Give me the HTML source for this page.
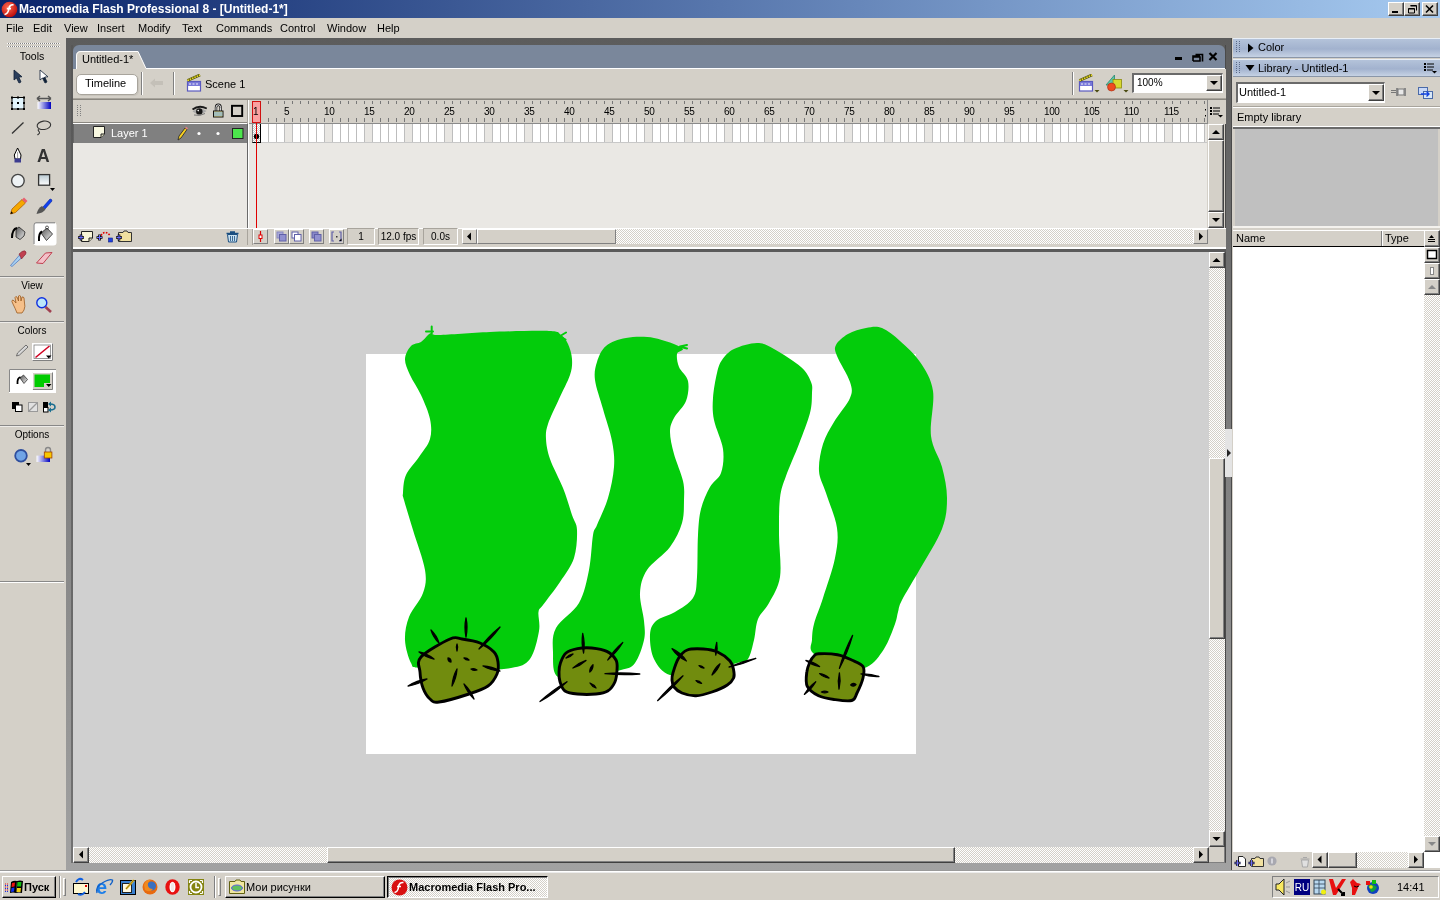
<!DOCTYPE html>
<html><head><meta charset="utf-8">
<style>
*{margin:0;padding:0;box-sizing:border-box}
html,body{will-change:transform;width:1440px;height:900px;overflow:hidden;background:#D4D0C8;font-family:"Liberation Sans",sans-serif;font-size:11px;color:#000}
.a{position:absolute}
.t{position:absolute;white-space:nowrap;line-height:13px}
.hatch{background-color:#E6E3DC;background-image:repeating-conic-gradient(#D4D0C8 0 25%,#FFFFFF 0 50%);background-size:2px 2px}
.btn{position:absolute;background:#D4D0C8;border-top:1px solid #fff;border-left:1px solid #fff;border-right:1px solid #404040;border-bottom:1px solid #404040;box-shadow:inset -1px -1px 0 #808080}
.sunk{position:absolute;border-top:1px solid #808080;border-left:1px solid #808080;border-right:1px solid #fff;border-bottom:1px solid #fff}
</style></head><body>
<!-- title bar -->
<div class="a" style="left:0;top:0;width:1440px;height:18px;background:linear-gradient(to right,#0A246A,#A6CAF0)"></div>
<div class="t" style="left:19px;top:2px;color:#fff;font-weight:bold;font-size:12px;line-height:14px">Macromedia Flash Professional 8 - [Untitled-1*]</div>
<!-- menu -->
<div class="t" style="left:6px;top:22px">File</div>
<div class="t" style="left:33px;top:22px">Edit</div>
<div class="t" style="left:64px;top:22px">View</div>
<div class="t" style="left:97px;top:22px">Insert</div>
<div class="t" style="left:138px;top:22px">Modify</div>
<div class="t" style="left:182px;top:22px">Text</div>
<div class="t" style="left:216px;top:22px">Commands</div>
<div class="t" style="left:280px;top:22px">Control</div>
<div class="t" style="left:327px;top:22px">Window</div>
<div class="t" style="left:377px;top:22px">Help</div>
<svg class="a" style="left:1px;top:1px" width="17" height="17"><defs><radialGradient id="flg" cx="0.4" cy="0.35" r="0.7"><stop offset="0" stop-color="#FF6A50"/><stop offset="1" stop-color="#B80808"/></radialGradient></defs><circle cx="8.5" cy="8.5" r="7.8" fill="url(#flg)"/><path d="M12.5,3.8 Q8.5,3.2 7.8,8 Q7.2,12.8 3.5,13.5 M5.8,7.6 h4.2" stroke="#fff" stroke-width="1.7" fill="none"/></svg>
<div class="btn" style="left:1388px;top:2px;width:16px;height:14px"></div>
<div class="btn" style="left:1404px;top:2px;width:16px;height:14px"></div>
<div class="btn" style="left:1422px;top:2px;width:16px;height:14px"></div>
<svg class="a" style="left:1388px;top:2px" width="50" height="14"><rect x="4" y="9" width="6" height="2" fill="#000"/>
<path d="M22.5,3.5 h6 v5 M20.5,6.5 h6 v4.5 h-6 z" stroke="#000" stroke-width="1" fill="none"/><path d="M22.5,4 h6 M20.5,7 h6" stroke="#000" stroke-width="1"/>
<path d="M38,3.5 L45,10.5 M45,3.5 L38,10.5" stroke="#000" stroke-width="1.6"/></svg>
<!-- tools panel -->
<svg class="a" style="left:0;top:0" width="66" height="600" viewBox="0 0 66 600">
<defs>
<linearGradient id="gblue" x1="0" x2="1"><stop offset="0" stop-color="#fff"/><stop offset="1" stop-color="#0000C0"/></linearGradient>
<linearGradient id="glight" x1="0" y1="0" x2="0" y2="1"><stop offset="0" stop-color="#B8C8D0"/><stop offset="1" stop-color="#fff"/></linearGradient>
<linearGradient id="ggray" x1="0" y1="0" x2="1" y2="1"><stop offset="0" stop-color="#555"/><stop offset="1" stop-color="#eee"/></linearGradient>
</defs>
<!-- gripper -->
<path d="M7,43.5 H60 M7,46.5 H60" stroke="#fff" stroke-width="1" stroke-dasharray="1 1"/>
<path d="M8,43.5 H60 M8,46.5 H60" stroke="#808080" stroke-width="1" stroke-dasharray="1 1"/>
<!-- arrow -->
<path d="M14,70 L14,80 L16.5,78 L19,83 L21,82 L18.8,77 L22,76.8 Z" fill="#2A3E5C" stroke="#0F2036" stroke-width="0.8"/>
<path d="M40,70 L40,80 L42.5,78 L45,83 L47,82 L44.8,77 L48,76.8 Z" fill="#fff" stroke="#0F2036" stroke-width="0.8"/>
<path d="M42.5,78 L45,83 L47,82 L44.8,77 Z" fill="#0F2036"/>
<!-- free transform -->
<rect x="12" y="97.5" width="12" height="11.5" fill="#E2F4FC" stroke="#000" stroke-width="1"/>
<g fill="#000"><rect x="11" y="96.5" width="2" height="2"/><rect x="17" y="96.5" width="2" height="2"/><rect x="23" y="96.5" width="2" height="2"/><rect x="11" y="102" width="2" height="2"/><rect x="23" y="102" width="2" height="2"/><rect x="11" y="108" width="2" height="2"/><rect x="17" y="108" width="2" height="2"/><rect x="23" y="108" width="2" height="2"/><rect x="17" y="102" width="2" height="2"/></g>
<!-- gradient transform -->
<path d="M37,98.5 H51 M37,98.5 L40,96 M37,98.5 L40,101 M51,98.5 L48,96 M51,98.5 L48,101" stroke="#555" stroke-width="1.5" fill="none"/>
<rect x="37.5" y="102" width="13.5" height="7" fill="url(#gblue)"/>
<!-- line -->
<path d="M12,133.5 L23.5,122.5" stroke="#333" stroke-width="1.3"/>
<!-- lasso -->
<ellipse cx="43.9" cy="125.3" rx="6.8" ry="4.2" fill="none" stroke="#333" stroke-width="1.1" transform="rotate(-8 43.9 125.3)"/>
<path d="M38.5,129 C37,131 40,131.5 39.5,133 C39,134 38,134.5 37.5,135" stroke="#333" stroke-width="1.1" fill="none"/>
<!-- pen -->
<path d="M17.6,148 L14.3,155 L15,159 L20.5,159 L21,155 Z" fill="#fff" stroke="#000" stroke-width="1"/>
<path d="M17.6,152 V158" stroke="#888" stroke-width="0.8"/>
<rect x="14.5" y="158.5" width="6.5" height="4" fill="#3C3C90"/>
<!-- A -->
<text x="37" y="162" font-family="Liberation Sans" font-weight="bold" font-size="17.5" fill="#333">A</text>
<!-- circle -->
<circle cx="17.9" cy="180.7" r="6.3" fill="#EEF2F4" stroke="#444" stroke-width="1.4"/>
<!-- rect -->
<rect x="38.6" y="174.6" width="11" height="10.6" fill="url(#glight)" stroke="#333" stroke-width="1.3"/>
<path d="M50,188 L55,188 L52.5,191 Z" fill="#000"/>
<!-- pencil -->
<path d="M10.5,214 L12,209 L22,199.5 L25.5,203 L15.5,212.5 Z" fill="#F6A800" stroke="#B06000" stroke-width="0.8"/>
<path d="M22,199.5 L24,197.5 L27.5,201 L25.5,203 Z" fill="#E86070"/>
<path d="M10.5,214 L11.3,211.3 L13.2,213.2 Z" fill="#000"/>
<!-- brush -->
<path d="M43,207 L50,199 Q52,199 52,201 L45,209 Z" fill="#1040F0" stroke="#0020A0" stroke-width="0.6"/>
<path d="M36.5,214 Q38,208 42,206 L45.5,209.5 Q43,213 36.5,214 Z" fill="#555"/>
<!-- selected button -->
<rect x="33.5" y="222.5" width="23" height="23" rx="3" fill="#fff"/>
<path d="M34,244 V225 Q34,222.8 36,222.8 H55" stroke="#777" stroke-width="1" fill="none"/>
<!-- ink bottle -->
<path d="M16,229 L19,227 L25,232 L24,236 L20,239.5 L16,237 Z" fill="url(#ggray)" stroke="#222" stroke-width="0.8"/>
<path d="M17,228 Q12,229 12,238" stroke="#000" stroke-width="2" fill="none"/>
<!-- bucket -->
<path d="M41,233 L47,228 L52.5,234 L46.5,240.5 Z" fill="url(#ggray)" stroke="#222" stroke-width="0.8"/>
<circle cx="47" cy="227.5" r="1.5" fill="none" stroke="#333" stroke-width="0.8"/>
<path d="M42,231.5 Q38.5,233 39,241" stroke="#000" stroke-width="2" fill="none"/>
<!-- dropper -->
<path d="M10.5,265.5 L20,254.5 L22.5,257 L12,266.5 Z" fill="#A8D0F0" stroke="#4070C0" stroke-width="0.7"/>
<path d="M19,254 L22,251.5 Q25,250 26,252 Q26.5,254 24,256 L21.5,259 Z" fill="#C04050" stroke="#802030" stroke-width="0.6"/>
<!-- eraser -->
<path d="M36.5,263 L45.5,253 L52,252.5 L43,263.5 Z" fill="#F3C0C8" stroke="#C04050" stroke-width="1"/>
<!-- separators -->
<rect x="0" y="276" width="64" height="1" fill="#888"/><rect x="0" y="277" width="64" height="1" fill="#fff" opacity=".6"/>
<text x="32" y="289" text-anchor="middle" font-family="Liberation Sans" font-size="10">View</text>
<!-- hand -->
<path d="M13,304 Q11,301 12.5,300 Q14,300 16,303 L15,297.5 Q15.5,296 17,297 L18.5,301 L18.5,296 Q19.5,295 20.5,296 L21,301 L22,297 Q23.5,296.5 24,298 L24.5,303 Q25.5,306 24,310 L22,313 L17,313 Q15.5,309 13,304 Z" fill="#F6C08A" stroke="#9A5A20" stroke-width="0.8"/>
<!-- zoom -->
<path d="M45.5,307 L51,312" stroke="#A04050" stroke-width="2.6"/>
<circle cx="41.8" cy="302.8" r="5" fill="#BCE6FA" stroke="#1030E0" stroke-width="1.4"/>
<rect x="0" y="321" width="64" height="1" fill="#888"/><rect x="0" y="322" width="64" height="1" fill="#fff" opacity=".6"/>
<text x="32" y="334" text-anchor="middle" font-family="Liberation Sans" font-size="10">Colors</text>
<!-- stroke pencil -->
<path d="M16.5,356 L17.5,353 L26,345 L28,347 L19.5,355 Z" fill="#D8D8D8" stroke="#555" stroke-width="0.8"/>
<!-- stroke swatch -->
<rect x="32" y="343" width="21" height="18" fill="#fff"/>
<path d="M32.5,360.5 V343.5 H52.5" stroke="#fff" fill="none"/>
<path d="M32.5,360.5 H52.5 V343.5" stroke="#808080" fill="none"/>
<rect x="34" y="345" width="16.5" height="13.5" fill="#fff" stroke="#808080" stroke-width="0.8"/>
<path d="M35.5,357.5 L49.5,346" stroke="#D00020" stroke-width="1.6"/>
<path d="M46,355.5 L51.5,355.5 L48.75,358.5 Z" fill="#000"/>
<!-- fill row -->
<rect x="9" y="369" width="47" height="24" fill="#fff"/>
<path d="M9.5,392 V369.5 H56" stroke="#888" stroke-width="1" fill="none"/>
<path d="M20,378 L23.5,375 L27.5,379.5 L24,383.5 Z" fill="url(#ggray)" stroke="#222" stroke-width="0.7"/>
<path d="M20.5,377 Q17,378 17.5,384" stroke="#000" stroke-width="1.8" fill="none"/>
<rect x="32.5" y="372" width="20" height="18" fill="#D4D0C8"/>
<path d="M32.5,389.5 V372.5 H52.5" stroke="#fff" fill="none"/>
<path d="M33,389.5 H52.5 V372.5" stroke="#808080" fill="none"/>
<path d="M34.5,374.5 H50 V383 H44 V387 H34.5 Z" fill="#00CC00"/>
<path d="M46,384 L51.5,384 L48.75,387 Z" fill="#000"/>
<!-- small icons -->
<rect x="12" y="402" width="7" height="7" fill="#000"/>
<rect x="15.5" y="405" width="6.5" height="6.5" fill="#fff" stroke="#000" stroke-width="1"/>
<rect x="28.5" y="402.5" width="9" height="9" fill="#E0E0E0" stroke="#999" stroke-width="1"/>
<path d="M29,411 L37,403" stroke="#999" stroke-width="1.2"/>
<rect x="43" y="402" width="5" height="5" fill="#000"/>
<rect x="43.5" y="407.5" width="4.5" height="4.5" fill="#fff" stroke="#000" stroke-width="1"/>
<path d="M50,404 Q55,404 55,407 Q55,410 50,410" stroke="#1A6E90" stroke-width="1.6" fill="none"/>
<path d="M48,404 L51,401.5 L51,406.5 Z M48,410 L51,407.5 L51,412.5 Z" fill="#1A6E90"/>
<rect x="0" y="425" width="64" height="1" fill="#888"/><rect x="0" y="426" width="64" height="1" fill="#fff" opacity=".6"/>
<text x="32" y="438" text-anchor="middle" font-family="Liberation Sans" font-size="10">Options</text>
<!-- options icons -->
<circle cx="21" cy="455.8" r="5.8" fill="#70A4E6" stroke="#2E4E9E" stroke-width="1.8"/>
<path d="M26,463 L31,463 L28.5,466 Z" fill="#000"/>
<rect x="36.5" y="455.6" width="13.5" height="6.4" fill="url(#gblue)"/>
<path d="M45.5,452 V450 Q45.5,447.5 48,447.5 Q50.5,447.5 50.5,450 V452" stroke="#888" stroke-width="1.4" fill="none"/>
<rect x="44.3" y="452" width="7.6" height="6" fill="#F8C800" stroke="#A04000" stroke-width="0.8"/>
<rect x="0" y="581" width="64" height="1" fill="#888"/><rect x="0" y="582" width="64" height="1" fill="#fff"/>
</svg>
<div class="t" style="left:0;top:50px;width:64px;text-align:center;font-size:10.5px">Tools</div>
<div class="a" style="left:66px;top:38px;width:1166px;height:833px;background:linear-gradient(to bottom,#5C5C5C,#A2A2A2)"></div>
<div class="a" style="left:71px;top:45px;width:2px;height:818px;background:linear-gradient(to bottom,#555,#666);opacity:.8"></div>
<div class="a" style="left:1225px;top:45px;width:1px;height:818px;background:#4A4A4A"></div>
<div class="a" style="left:1231px;top:38px;width:1px;height:833px;background:#4A4A4A"></div>
<div class="a" style="left:73px;top:862px;width:1153px;height:1px;background:#5A5A5A"></div>
<div class="a" style="left:73px;top:45px;width:1152px;height:24px;background:#7A879B;border-radius:6px 6px 0 0"></div>
<svg class="a" style="left:73px;top:45px" width="90" height="25"><path d="M3,24 V11 Q3,6 8,6 H65 L73,23.5 H90 V25 H3 Z" fill="#D4D0C8"/><path d="M3.5,24 V11 Q3.5,6.5 8,6.5 H65 L73,23.5 H90" stroke="#fff" fill="none"/></svg>
<div class="a" style="left:146px;top:68px;width:1079px;height:1px;background:#fff"></div>
<div class="t" style="left:82px;top:53px">Untitled-1*</div>
<svg class="a" style="left:1170px;top:48px" width="56" height="16"><rect x="5" y="9" width="7" height="3" fill="#000"/><path d="M25.5,6.5 h7 v7 M23,13 h7 v-4 h-7 v4 m0,-4 v-1 h7" stroke="#000" stroke-width="1.6" fill="none"/><path d="M39.5,5 L46.5,12 M46.5,5 L39.5,12" stroke="#000" stroke-width="2.2"/></svg>
<div class="a" style="left:73px;top:69px;width:1153px;height:30px;background:#D4D0C8"></div>
<div class="a" style="left:73px;top:98px;width:1153px;height:1px;background:#A8A49C"></div>
<div class="a" style="left:73px;top:99px;width:1153px;height:1px;background:#8A8780"></div>
<div class="a" style="left:76px;top:74px;width:62px;height:21px;background:#fff;border:1px solid #A8A49C;border-radius:5px;box-shadow:1px 1px 0 #C8C4BC"></div>
<div class="t" style="left:85px;top:77px">Timeline</div>
<div class="a" style="left:141px;top:72px;width:1px;height:23px;background:#808080"></div><div class="a" style="left:142px;top:72px;width:1px;height:23px;background:#fff"></div>
<svg class="a" style="left:148px;top:77px" width="18" height="14"><path d="M2,6 L7,1.5 V4 H15 V8 H7 V10.5 Z" fill="#C4C0B8"/></svg>
<div class="a" style="left:173px;top:72px;width:1px;height:23px;background:#808080"></div><div class="a" style="left:174px;top:72px;width:1px;height:23px;background:#fff"></div>
<svg class="a" style="left:186px;top:74px" width="18" height="19"><rect x="1.5" y="7.5" width="13" height="9.5" fill="#fff" stroke="#5A5AC0" stroke-width="1.2"/><rect x="2" y="8" width="12" height="4" fill="#7878D8"/><path d="M3,10 h2 M6.5,10 h2 M10,10 h2" stroke="#fff" stroke-width="0.9"/><path d="M1.5,6.5 L14,1" stroke="#5A5A10" stroke-width="3"/><path d="M1.5,6.5 L14,1" stroke="#F0E020" stroke-width="1.6" stroke-dasharray="1.5 1"/></svg>
<div class="t" style="left:205px;top:78px">Scene 1</div>
<div class="a" style="left:1072px;top:72px;width:1px;height:23px;background:#808080"></div><div class="a" style="left:1073px;top:72px;width:1px;height:23px;background:#fff"></div>
<svg class="a" style="left:1078px;top:74px" width="24" height="20"><rect x="1.5" y="7.5" width="13" height="9.5" fill="#fff" stroke="#5A5AC0" stroke-width="1.2"/><rect x="2" y="8" width="12" height="4" fill="#7878D8"/><path d="M3,10 h2 M6.5,10 h2 M10,10 h2" stroke="#fff" stroke-width="0.9"/><path d="M1.5,6.5 L14,1" stroke="#5A5A10" stroke-width="3"/><path d="M1.5,6.5 L14,1" stroke="#F0E020" stroke-width="1.6" stroke-dasharray="1.5 1"/><path d="M16.5,16 h5 l-2.5,2.5 z" fill="#4A4A10"/></svg>
<svg class="a" style="left:1105px;top:74px" width="26" height="20"><path d="M1,11 L9.5,1 V11 Z" fill="#5AC8A8" stroke="#2A8870" stroke-width="0.8"/><rect x="8" y="5.5" width="8.5" height="8.5" fill="#D8D830" stroke="#8A8A10" stroke-width="0.8"/><circle cx="6.5" cy="13" r="4" fill="#F04A20" stroke="#A02A10" stroke-width="0.6"/><path d="M18.5,16 h5 l-2.5,2.5 z" fill="#4A4A10"/></svg>
<div class="a" style="left:1132px;top:73px;width:91px;height:20px;background:#fff;border-top:2px solid #6A6A6A;border-left:2px solid #6A6A6A;border-bottom:1px solid #fff;border-right:1px solid #fff;box-shadow:0 0 0 0 #000"></div>
<div class="t" style="left:1137px;top:76px;font-size:10px">100%</div>
<div class="btn" style="left:1206px;top:75px;width:16px;height:16px"></div>
<svg class="a" style="left:1206px;top:75px" width="16" height="16"><path d="M4,6 h8 l-4,4 z" fill="#000"/></svg>
<div class="a" style="left:1207px;top:100px;width:18px;height:147px;background:#D4D0C8"></div>
<div class="a" style="left:73px;top:100px;width:1153px;height:24px;background:#D4D0C8"></div>
<div class="a" style="left:73px;top:122px;width:175px;height:1px;background:#8A8780"></div>
<svg class="a" style="left:76px;top:104px" width="8" height="14"><g fill="#808080"><rect x="1" y="1" width="1" height="1"/><rect x="1" y="3" width="1" height="1"/><rect x="1" y="5" width="1" height="1"/><rect x="1" y="7" width="1" height="1"/><rect x="1" y="9" width="1" height="1"/><rect x="1" y="11" width="1" height="1"/><rect x="4" y="1" width="1" height="1"/><rect x="4" y="3" width="1" height="1"/><rect x="4" y="5" width="1" height="1"/><rect x="4" y="7" width="1" height="1"/><rect x="4" y="9" width="1" height="1"/><rect x="4" y="11" width="1" height="1"/></g></svg>
<svg class="a" style="left:190px;top:103px" width="56" height="16"><path d="M2.5,8.5 Q9,3 16.5,8 Q10,14 2.5,8.5 Z" fill="#A8A8A8"/><circle cx="9.3" cy="8.4" r="3.2" fill="#151515"/><circle cx="8.2" cy="7.6" r="0.8" fill="#fff"/><path d="M2.5,6.5 Q9,1.5 16.8,5.5" stroke="#1A1A1A" stroke-width="1.8" fill="none"/><path d="M4,12 Q10,13.5 15,10.5" stroke="#777" stroke-width="1" fill="none"/><path d="M26,8 V4.5 Q26,1.8 28.3,1.8 Q30.6,1.8 30.6,4.5 V8" stroke="#111" stroke-width="2.4" fill="none"/><path d="M26,8 V4.5 Q26,1.8 28.3,1.8 Q30.6,1.8 30.6,4.5 V8" stroke="#fff" stroke-width="0.9" fill="none"/><rect x="23.5" y="8" width="9.5" height="6" fill="#F8F0A0" stroke="#111" stroke-width="1"/><path d="M24,10 h8.5 M24,12 h8.5" stroke="#3A80D8" stroke-width="0.9"/><rect x="42" y="2.8" width="10.2" height="10.2" fill="none" stroke="#000" stroke-width="1.9"/></svg>
<div class="a" style="left:247px;top:100px;width:1px;height:24px;background:#A8A49C"></div>
<div class="a" style="left:248px;top:100px;width:1px;height:144px;background:#fff"></div>
<svg class="a" style="left:0;top:100px" width="1210" height="24"><path d="M260.5,1 v3 M260.5,18 v4 M268.5,1 v3 M268.5,18 v4 M276.5,1 v3 M276.5,18 v4 M284.5,1 v3 M284.5,18 v4 M292.5,1 v3 M292.5,18 v4 M300.5,1 v3 M300.5,18 v4 M308.5,1 v3 M308.5,18 v4 M316.5,1 v3 M316.5,18 v4 M324.5,1 v3 M324.5,18 v4 M332.5,1 v3 M332.5,18 v4 M340.5,1 v3 M340.5,18 v4 M348.5,1 v3 M348.5,18 v4 M356.5,1 v3 M356.5,18 v4 M364.5,1 v3 M364.5,18 v4 M372.5,1 v3 M372.5,18 v4 M380.5,1 v3 M380.5,18 v4 M388.5,1 v3 M388.5,18 v4 M396.5,1 v3 M396.5,18 v4 M404.5,1 v3 M404.5,18 v4 M412.5,1 v3 M412.5,18 v4 M420.5,1 v3 M420.5,18 v4 M428.5,1 v3 M428.5,18 v4 M436.5,1 v3 M436.5,18 v4 M444.5,1 v3 M444.5,18 v4 M452.5,1 v3 M452.5,18 v4 M460.5,1 v3 M460.5,18 v4 M468.5,1 v3 M468.5,18 v4 M476.5,1 v3 M476.5,18 v4 M484.5,1 v3 M484.5,18 v4 M492.5,1 v3 M492.5,18 v4 M500.5,1 v3 M500.5,18 v4 M508.5,1 v3 M508.5,18 v4 M516.5,1 v3 M516.5,18 v4 M524.5,1 v3 M524.5,18 v4 M532.5,1 v3 M532.5,18 v4 M540.5,1 v3 M540.5,18 v4 M548.5,1 v3 M548.5,18 v4 M556.5,1 v3 M556.5,18 v4 M564.5,1 v3 M564.5,18 v4 M572.5,1 v3 M572.5,18 v4 M580.5,1 v3 M580.5,18 v4 M588.5,1 v3 M588.5,18 v4 M596.5,1 v3 M596.5,18 v4 M604.5,1 v3 M604.5,18 v4 M612.5,1 v3 M612.5,18 v4 M620.5,1 v3 M620.5,18 v4 M628.5,1 v3 M628.5,18 v4 M636.5,1 v3 M636.5,18 v4 M644.5,1 v3 M644.5,18 v4 M652.5,1 v3 M652.5,18 v4 M660.5,1 v3 M660.5,18 v4 M668.5,1 v3 M668.5,18 v4 M676.5,1 v3 M676.5,18 v4 M684.5,1 v3 M684.5,18 v4 M692.5,1 v3 M692.5,18 v4 M700.5,1 v3 M700.5,18 v4 M708.5,1 v3 M708.5,18 v4 M716.5,1 v3 M716.5,18 v4 M724.5,1 v3 M724.5,18 v4 M732.5,1 v3 M732.5,18 v4 M740.5,1 v3 M740.5,18 v4 M748.5,1 v3 M748.5,18 v4 M756.5,1 v3 M756.5,18 v4 M764.5,1 v3 M764.5,18 v4 M772.5,1 v3 M772.5,18 v4 M780.5,1 v3 M780.5,18 v4 M788.5,1 v3 M788.5,18 v4 M796.5,1 v3 M796.5,18 v4 M804.5,1 v3 M804.5,18 v4 M812.5,1 v3 M812.5,18 v4 M820.5,1 v3 M820.5,18 v4 M828.5,1 v3 M828.5,18 v4 M836.5,1 v3 M836.5,18 v4 M844.5,1 v3 M844.5,18 v4 M852.5,1 v3 M852.5,18 v4 M860.5,1 v3 M860.5,18 v4 M868.5,1 v3 M868.5,18 v4 M876.5,1 v3 M876.5,18 v4 M884.5,1 v3 M884.5,18 v4 M892.5,1 v3 M892.5,18 v4 M900.5,1 v3 M900.5,18 v4 M908.5,1 v3 M908.5,18 v4 M916.5,1 v3 M916.5,18 v4 M924.5,1 v3 M924.5,18 v4 M932.5,1 v3 M932.5,18 v4 M940.5,1 v3 M940.5,18 v4 M948.5,1 v3 M948.5,18 v4 M956.5,1 v3 M956.5,18 v4 M964.5,1 v3 M964.5,18 v4 M972.5,1 v3 M972.5,18 v4 M980.5,1 v3 M980.5,18 v4 M988.5,1 v3 M988.5,18 v4 M996.5,1 v3 M996.5,18 v4 M1004.5,1 v3 M1004.5,18 v4 M1012.5,1 v3 M1012.5,18 v4 M1020.5,1 v3 M1020.5,18 v4 M1028.5,1 v3 M1028.5,18 v4 M1036.5,1 v3 M1036.5,18 v4 M1044.5,1 v3 M1044.5,18 v4 M1052.5,1 v3 M1052.5,18 v4 M1060.5,1 v3 M1060.5,18 v4 M1068.5,1 v3 M1068.5,18 v4 M1076.5,1 v3 M1076.5,18 v4 M1084.5,1 v3 M1084.5,18 v4 M1092.5,1 v3 M1092.5,18 v4 M1100.5,1 v3 M1100.5,18 v4 M1108.5,1 v3 M1108.5,18 v4 M1116.5,1 v3 M1116.5,18 v4 M1124.5,1 v3 M1124.5,18 v4 M1132.5,1 v3 M1132.5,18 v4 M1140.5,1 v3 M1140.5,18 v4 M1148.5,1 v3 M1148.5,18 v4 M1156.5,1 v3 M1156.5,18 v4 M1164.5,1 v3 M1164.5,18 v4 M1172.5,1 v3 M1172.5,18 v4 M1180.5,1 v3 M1180.5,18 v4 M1188.5,1 v3 M1188.5,18 v4 M1196.5,1 v3 M1196.5,18 v4 M1204.5,1 v3 M1204.5,18 v4" stroke="#777" stroke-width="1"/></svg>
<div class="t" style="left:253px;top:105px;font-size:10px;letter-spacing:-0.4px">1</div><div class="t" style="left:284px;top:105px;font-size:10px;letter-spacing:-0.4px">5</div><div class="t" style="left:324px;top:105px;font-size:10px;letter-spacing:-0.4px">10</div><div class="t" style="left:364px;top:105px;font-size:10px;letter-spacing:-0.4px">15</div><div class="t" style="left:404px;top:105px;font-size:10px;letter-spacing:-0.4px">20</div><div class="t" style="left:444px;top:105px;font-size:10px;letter-spacing:-0.4px">25</div><div class="t" style="left:484px;top:105px;font-size:10px;letter-spacing:-0.4px">30</div><div class="t" style="left:524px;top:105px;font-size:10px;letter-spacing:-0.4px">35</div><div class="t" style="left:564px;top:105px;font-size:10px;letter-spacing:-0.4px">40</div><div class="t" style="left:604px;top:105px;font-size:10px;letter-spacing:-0.4px">45</div><div class="t" style="left:644px;top:105px;font-size:10px;letter-spacing:-0.4px">50</div><div class="t" style="left:684px;top:105px;font-size:10px;letter-spacing:-0.4px">55</div><div class="t" style="left:724px;top:105px;font-size:10px;letter-spacing:-0.4px">60</div><div class="t" style="left:764px;top:105px;font-size:10px;letter-spacing:-0.4px">65</div><div class="t" style="left:804px;top:105px;font-size:10px;letter-spacing:-0.4px">70</div><div class="t" style="left:844px;top:105px;font-size:10px;letter-spacing:-0.4px">75</div><div class="t" style="left:884px;top:105px;font-size:10px;letter-spacing:-0.4px">80</div><div class="t" style="left:924px;top:105px;font-size:10px;letter-spacing:-0.4px">85</div><div class="t" style="left:964px;top:105px;font-size:10px;letter-spacing:-0.4px">90</div><div class="t" style="left:1004px;top:105px;font-size:10px;letter-spacing:-0.4px">95</div><div class="t" style="left:1044px;top:105px;font-size:10px;letter-spacing:-0.4px">100</div><div class="t" style="left:1084px;top:105px;font-size:10px;letter-spacing:-0.4px">105</div><div class="t" style="left:1124px;top:105px;font-size:10px;letter-spacing:-0.4px">110</div><div class="t" style="left:1164px;top:105px;font-size:10px;letter-spacing:-0.4px">115</div>
<div class="a" style="left:1207px;top:100px;width:1px;height:24px;background:#8A8A8A"></div>
<svg class="a" style="left:1204px;top:108px" width="3" height="10"><rect x="1" y="1" width="1" height="1.5" fill="#000"/><rect x="1" y="7" width="1" height="1.5" fill="#000"/></svg>
<svg class="a" style="left:1208px;top:104px" width="18" height="16"><g fill="#000"><rect x="2" y="3" width="2" height="2"/><rect x="2" y="6" width="2" height="2"/><rect x="2" y="9" width="2" height="2"/><rect x="5" y="3.5" width="7" height="1"/><rect x="5" y="6.5" width="7" height="1"/><rect x="5" y="9.5" width="6" height="1"/><path d="M10,11 h5 l-2.5,2.5 z"/></g></svg>
<div class="a" style="left:252px;top:101px;width:9px;height:22px;background:#F9A0A0;border:1px solid #D01010"></div>
<div class="t" style="left:253px;top:105px;font-size:10px">1</div>
<div class="a" style="left:73px;top:123px;width:174px;height:1px;background:#fff"></div>
<div class="a" style="left:74px;top:124px;width:173px;height:19px;background:#808080"></div>
<svg class="a" style="left:92px;top:125px" width="16" height="16"><path d="M1.5,1.5 H12.5 V9 L9,12.5 H1.5 Z" fill="#F8F8E0" stroke="#222" stroke-width="1"/><path d="M12.5,9 H9 V12.5" stroke="#222" stroke-width="1" fill="#D8D8B8"/></svg>
<div class="t" style="left:111px;top:127px;color:#fff">Layer 1</div>
<svg class="a" style="left:176px;top:126px" width="72" height="16"><path d="M2,14 L3,10 L9,2 L11,3.5 L5,12 Z" fill="#F8D020" stroke="#222" stroke-width="0.8"/><path d="M9,2 L10,0.8 L12,2.2 L11,3.5 Z" fill="#E88080"/><circle cx="23" cy="7.5" r="1.6" fill="#fff"/><circle cx="42" cy="7.5" r="1.6" fill="#fff"/><rect x="56.5" y="2.5" width="10.5" height="10" fill="#4CE64C" stroke="#222" stroke-width="1"/></svg>
<div class="a" style="left:73px;top:143px;width:174px;height:85px;background:#EAE8E4"></div>
<div class="a" style="left:249px;top:123px;width:958px;height:1px;background:#8A8A8A"></div>
<div class="a" style="left:249px;top:124px;width:3px;height:105px;background:#E4E2DC"></div>
<svg class="a" style="left:0;top:124px" width="1207" height="19"><rect x="252" y="0" width="8" height="18" fill="#FFFFFF"/><rect x="260" y="0" width="8" height="18" fill="#FFFFFF"/><rect x="268" y="0" width="8" height="18" fill="#FFFFFF"/><rect x="276" y="0" width="8" height="18" fill="#FFFFFF"/><rect x="284" y="0" width="8" height="18" fill="#E8E6E2"/><rect x="292" y="0" width="8" height="18" fill="#FFFFFF"/><rect x="300" y="0" width="8" height="18" fill="#FFFFFF"/><rect x="308" y="0" width="8" height="18" fill="#FFFFFF"/><rect x="316" y="0" width="8" height="18" fill="#FFFFFF"/><rect x="324" y="0" width="8" height="18" fill="#E8E6E2"/><rect x="332" y="0" width="8" height="18" fill="#FFFFFF"/><rect x="340" y="0" width="8" height="18" fill="#FFFFFF"/><rect x="348" y="0" width="8" height="18" fill="#FFFFFF"/><rect x="356" y="0" width="8" height="18" fill="#FFFFFF"/><rect x="364" y="0" width="8" height="18" fill="#E8E6E2"/><rect x="372" y="0" width="8" height="18" fill="#FFFFFF"/><rect x="380" y="0" width="8" height="18" fill="#FFFFFF"/><rect x="388" y="0" width="8" height="18" fill="#FFFFFF"/><rect x="396" y="0" width="8" height="18" fill="#FFFFFF"/><rect x="404" y="0" width="8" height="18" fill="#E8E6E2"/><rect x="412" y="0" width="8" height="18" fill="#FFFFFF"/><rect x="420" y="0" width="8" height="18" fill="#FFFFFF"/><rect x="428" y="0" width="8" height="18" fill="#FFFFFF"/><rect x="436" y="0" width="8" height="18" fill="#FFFFFF"/><rect x="444" y="0" width="8" height="18" fill="#E8E6E2"/><rect x="452" y="0" width="8" height="18" fill="#FFFFFF"/><rect x="460" y="0" width="8" height="18" fill="#FFFFFF"/><rect x="468" y="0" width="8" height="18" fill="#FFFFFF"/><rect x="476" y="0" width="8" height="18" fill="#FFFFFF"/><rect x="484" y="0" width="8" height="18" fill="#E8E6E2"/><rect x="492" y="0" width="8" height="18" fill="#FFFFFF"/><rect x="500" y="0" width="8" height="18" fill="#FFFFFF"/><rect x="508" y="0" width="8" height="18" fill="#FFFFFF"/><rect x="516" y="0" width="8" height="18" fill="#FFFFFF"/><rect x="524" y="0" width="8" height="18" fill="#E8E6E2"/><rect x="532" y="0" width="8" height="18" fill="#FFFFFF"/><rect x="540" y="0" width="8" height="18" fill="#FFFFFF"/><rect x="548" y="0" width="8" height="18" fill="#FFFFFF"/><rect x="556" y="0" width="8" height="18" fill="#FFFFFF"/><rect x="564" y="0" width="8" height="18" fill="#E8E6E2"/><rect x="572" y="0" width="8" height="18" fill="#FFFFFF"/><rect x="580" y="0" width="8" height="18" fill="#FFFFFF"/><rect x="588" y="0" width="8" height="18" fill="#FFFFFF"/><rect x="596" y="0" width="8" height="18" fill="#FFFFFF"/><rect x="604" y="0" width="8" height="18" fill="#E8E6E2"/><rect x="612" y="0" width="8" height="18" fill="#FFFFFF"/><rect x="620" y="0" width="8" height="18" fill="#FFFFFF"/><rect x="628" y="0" width="8" height="18" fill="#FFFFFF"/><rect x="636" y="0" width="8" height="18" fill="#FFFFFF"/><rect x="644" y="0" width="8" height="18" fill="#E8E6E2"/><rect x="652" y="0" width="8" height="18" fill="#FFFFFF"/><rect x="660" y="0" width="8" height="18" fill="#FFFFFF"/><rect x="668" y="0" width="8" height="18" fill="#FFFFFF"/><rect x="676" y="0" width="8" height="18" fill="#FFFFFF"/><rect x="684" y="0" width="8" height="18" fill="#E8E6E2"/><rect x="692" y="0" width="8" height="18" fill="#FFFFFF"/><rect x="700" y="0" width="8" height="18" fill="#FFFFFF"/><rect x="708" y="0" width="8" height="18" fill="#FFFFFF"/><rect x="716" y="0" width="8" height="18" fill="#FFFFFF"/><rect x="724" y="0" width="8" height="18" fill="#E8E6E2"/><rect x="732" y="0" width="8" height="18" fill="#FFFFFF"/><rect x="740" y="0" width="8" height="18" fill="#FFFFFF"/><rect x="748" y="0" width="8" height="18" fill="#FFFFFF"/><rect x="756" y="0" width="8" height="18" fill="#FFFFFF"/><rect x="764" y="0" width="8" height="18" fill="#E8E6E2"/><rect x="772" y="0" width="8" height="18" fill="#FFFFFF"/><rect x="780" y="0" width="8" height="18" fill="#FFFFFF"/><rect x="788" y="0" width="8" height="18" fill="#FFFFFF"/><rect x="796" y="0" width="8" height="18" fill="#FFFFFF"/><rect x="804" y="0" width="8" height="18" fill="#E8E6E2"/><rect x="812" y="0" width="8" height="18" fill="#FFFFFF"/><rect x="820" y="0" width="8" height="18" fill="#FFFFFF"/><rect x="828" y="0" width="8" height="18" fill="#FFFFFF"/><rect x="836" y="0" width="8" height="18" fill="#FFFFFF"/><rect x="844" y="0" width="8" height="18" fill="#E8E6E2"/><rect x="852" y="0" width="8" height="18" fill="#FFFFFF"/><rect x="860" y="0" width="8" height="18" fill="#FFFFFF"/><rect x="868" y="0" width="8" height="18" fill="#FFFFFF"/><rect x="876" y="0" width="8" height="18" fill="#FFFFFF"/><rect x="884" y="0" width="8" height="18" fill="#E8E6E2"/><rect x="892" y="0" width="8" height="18" fill="#FFFFFF"/><rect x="900" y="0" width="8" height="18" fill="#FFFFFF"/><rect x="908" y="0" width="8" height="18" fill="#FFFFFF"/><rect x="916" y="0" width="8" height="18" fill="#FFFFFF"/><rect x="924" y="0" width="8" height="18" fill="#E8E6E2"/><rect x="932" y="0" width="8" height="18" fill="#FFFFFF"/><rect x="940" y="0" width="8" height="18" fill="#FFFFFF"/><rect x="948" y="0" width="8" height="18" fill="#FFFFFF"/><rect x="956" y="0" width="8" height="18" fill="#FFFFFF"/><rect x="964" y="0" width="8" height="18" fill="#E8E6E2"/><rect x="972" y="0" width="8" height="18" fill="#FFFFFF"/><rect x="980" y="0" width="8" height="18" fill="#FFFFFF"/><rect x="988" y="0" width="8" height="18" fill="#FFFFFF"/><rect x="996" y="0" width="8" height="18" fill="#FFFFFF"/><rect x="1004" y="0" width="8" height="18" fill="#E8E6E2"/><rect x="1012" y="0" width="8" height="18" fill="#FFFFFF"/><rect x="1020" y="0" width="8" height="18" fill="#FFFFFF"/><rect x="1028" y="0" width="8" height="18" fill="#FFFFFF"/><rect x="1036" y="0" width="8" height="18" fill="#FFFFFF"/><rect x="1044" y="0" width="8" height="18" fill="#E8E6E2"/><rect x="1052" y="0" width="8" height="18" fill="#FFFFFF"/><rect x="1060" y="0" width="8" height="18" fill="#FFFFFF"/><rect x="1068" y="0" width="8" height="18" fill="#FFFFFF"/><rect x="1076" y="0" width="8" height="18" fill="#FFFFFF"/><rect x="1084" y="0" width="8" height="18" fill="#E8E6E2"/><rect x="1092" y="0" width="8" height="18" fill="#FFFFFF"/><rect x="1100" y="0" width="8" height="18" fill="#FFFFFF"/><rect x="1108" y="0" width="8" height="18" fill="#FFFFFF"/><rect x="1116" y="0" width="8" height="18" fill="#FFFFFF"/><rect x="1124" y="0" width="8" height="18" fill="#E8E6E2"/><rect x="1132" y="0" width="8" height="18" fill="#FFFFFF"/><rect x="1140" y="0" width="8" height="18" fill="#FFFFFF"/><rect x="1148" y="0" width="8" height="18" fill="#FFFFFF"/><rect x="1156" y="0" width="8" height="18" fill="#FFFFFF"/><rect x="1164" y="0" width="8" height="18" fill="#E8E6E2"/><rect x="1172" y="0" width="8" height="18" fill="#FFFFFF"/><rect x="1180" y="0" width="8" height="18" fill="#FFFFFF"/><rect x="1188" y="0" width="8" height="18" fill="#FFFFFF"/><rect x="1196" y="0" width="8" height="18" fill="#FFFFFF"/><rect x="1204" y="0" width="8" height="18" fill="#E8E6E2"/><path d="M260.5,0 v18 M268.5,0 v18 M276.5,0 v18 M284.5,0 v18 M292.5,0 v18 M300.5,0 v18 M308.5,0 v18 M316.5,0 v18 M324.5,0 v18 M332.5,0 v18 M340.5,0 v18 M348.5,0 v18 M356.5,0 v18 M364.5,0 v18 M372.5,0 v18 M380.5,0 v18 M388.5,0 v18 M396.5,0 v18 M404.5,0 v18 M412.5,0 v18 M420.5,0 v18 M428.5,0 v18 M436.5,0 v18 M444.5,0 v18 M452.5,0 v18 M460.5,0 v18 M468.5,0 v18 M476.5,0 v18 M484.5,0 v18 M492.5,0 v18 M500.5,0 v18 M508.5,0 v18 M516.5,0 v18 M524.5,0 v18 M532.5,0 v18 M540.5,0 v18 M548.5,0 v18 M556.5,0 v18 M564.5,0 v18 M572.5,0 v18 M580.5,0 v18 M588.5,0 v18 M596.5,0 v18 M604.5,0 v18 M612.5,0 v18 M620.5,0 v18 M628.5,0 v18 M636.5,0 v18 M644.5,0 v18 M652.5,0 v18 M660.5,0 v18 M668.5,0 v18 M676.5,0 v18 M684.5,0 v18 M692.5,0 v18 M700.5,0 v18 M708.5,0 v18 M716.5,0 v18 M724.5,0 v18 M732.5,0 v18 M740.5,0 v18 M748.5,0 v18 M756.5,0 v18 M764.5,0 v18 M772.5,0 v18 M780.5,0 v18 M788.5,0 v18 M796.5,0 v18 M804.5,0 v18 M812.5,0 v18 M820.5,0 v18 M828.5,0 v18 M836.5,0 v18 M844.5,0 v18 M852.5,0 v18 M860.5,0 v18 M868.5,0 v18 M876.5,0 v18 M884.5,0 v18 M892.5,0 v18 M900.5,0 v18 M908.5,0 v18 M916.5,0 v18 M924.5,0 v18 M932.5,0 v18 M940.5,0 v18 M948.5,0 v18 M956.5,0 v18 M964.5,0 v18 M972.5,0 v18 M980.5,0 v18 M988.5,0 v18 M996.5,0 v18 M1004.5,0 v18 M1012.5,0 v18 M1020.5,0 v18 M1028.5,0 v18 M1036.5,0 v18 M1044.5,0 v18 M1052.5,0 v18 M1060.5,0 v18 M1068.5,0 v18 M1076.5,0 v18 M1084.5,0 v18 M1092.5,0 v18 M1100.5,0 v18 M1108.5,0 v18 M1116.5,0 v18 M1124.5,0 v18 M1132.5,0 v18 M1140.5,0 v18 M1148.5,0 v18 M1156.5,0 v18 M1164.5,0 v18 M1172.5,0 v18 M1180.5,0 v18 M1188.5,0 v18 M1196.5,0 v18 M1204.5,0 v18" stroke="#BDBDBD" stroke-width="1"/><rect x="252" y="18" width="955" height="1" fill="#C8C8C8"/></svg>
<div class="a hatch" style="left:252px;top:124px;width:9px;height:19px;background-image:repeating-conic-gradient(#FFFFFF 0 25%,#C8C8C8 0 50%);border-left:1px solid #808080;border-right:1px solid #000;border-bottom:1px solid #000"></div>
<svg class="a" style="left:252px;top:124px" width="10" height="20"><circle cx="4.5" cy="12.5" r="2.7" fill="#000"/></svg>
<div class="a" style="left:249px;top:143px;width:958px;height:85px;background:#EAE8E4"></div>
<div class="a" style="left:256px;top:123px;width:1px;height:106px;background:#E00000"></div>
<div class="a hatch" style="left:1208px;top:124px;width:16px;height:104px"></div>
<div class="btn" style="left:1208px;top:124px;width:16px;height:16px"></div><svg class="a" style="left:1208px;top:124px" width="16" height="16"><path d="M4,10 h8 l-4,-4 z" fill="#000"/></svg>
<div class="btn" style="left:1208px;top:140px;width:16px;height:72px"></div>
<div class="btn" style="left:1208px;top:212px;width:16px;height:16px"></div><svg class="a" style="left:1208px;top:212px" width="16" height="16"><path d="M4,6 h8 l-4,4 z" fill="#000"/></svg>
<div class="a" style="left:73px;top:228px;width:1153px;height:1px;background:#fff"></div>
<div class="a" style="left:73px;top:229px;width:1153px;height:18px;background:#D4D0C8"></div>
<div class="a" style="left:73px;top:247px;width:1153px;height:2px;background:#fff"></div>
<div class="a" style="left:73px;top:249px;width:1153px;height:3px;background:#5A5A5A"></div>
<div class="a" style="left:247px;top:229px;width:1px;height:16px;background:#A8A49C"></div><div class="a" style="left:252px;top:229px;width:1px;height:16px;background:#A8A49C"></div>
<svg class="a" style="left:76px;top:229px" width="170" height="18"><path d="M5.5,2.5 H16.5 V9 L13,12.5 H5.5 Z" fill="#F8F4D8" stroke="#222" stroke-width="1"/><path d="M16.5,9 H13 V12.5" stroke="#222" stroke-width="1" fill="#D8D4B0"/><path d="M2.0,8.5 h6 M5.0,5.5 v6" stroke="#000" stroke-width="2.6"/><path d="M2.5,8.5 h5 M5.0,6.0 v5" stroke="#6A6AF8" stroke-width="1.1"/><path d="M25,6.5 Q29,0.5 34,6.5" stroke="#E00000" stroke-width="1.6" stroke-dasharray="1.6 1.4" fill="none"/><rect x="32.5" y="9" width="4" height="4" fill="#2040E0" stroke="#102080" stroke-width="0.6"/><path d="M20.5,8.5 h6 M23.5,5.5 v6" stroke="#000" stroke-width="2.6"/><path d="M21.0,8.5 h5 M23.5,6.0 v5" stroke="#6A6AF8" stroke-width="1.1"/><path d="M42.5,3.5 H47 L48,2 H51 L52,3.5 H55.5 V12.5 H42.5 Z" fill="#F0E0A0" stroke="#333" stroke-width="1"/><path d="M40.0,8.5 h6 M43.0,5.5 v6" stroke="#000" stroke-width="2.6"/><path d="M40.5,8.5 h5 M43.0,6.0 v5" stroke="#6A6AF8" stroke-width="1.1"/><path d="M150.5,4.5 h12 M154,3 h5" stroke="#1A4E80" stroke-width="1.4"/><path d="M151.5,5.5 h10 l-1,7.5 h-8 z" fill="#C8E0F0" stroke="#1A4E80" stroke-width="1"/><path d="M154.5,7 v5 M156.5,7 v5 M158.5,7 v5" stroke="#1A4E80" stroke-width="0.8"/></svg>
<div class="a" style="left:253px;top:229px;width:15px;height:15px;background:#D4D0C8;border-top:1px solid #fff;border-left:1px solid #fff;border-right:1px solid #808080;border-bottom:1px solid #808080"></div>
<svg class="a" style="left:253px;top:229px" width="15" height="15"><path d="M7.5,2 v11" stroke="#E00000" stroke-width="1.2"/><rect x="6" y="6" width="3" height="3.5" fill="#fff" stroke="#E00000" stroke-width="1"/></svg>
<div class="a" style="left:274px;top:229px;width:15px;height:15px;background:#D4D0C8;border-top:1px solid #fff;border-left:1px solid #fff;border-right:1px solid #808080;border-bottom:1px solid #808080"></div>
<svg class="a" style="left:274px;top:229px" width="15" height="15"><rect x="3" y="3" width="6" height="6" fill="#A8A8D8" stroke="#8888C0"/><rect x="5.5" y="5.5" width="6.5" height="6.5" fill="#9090D0" stroke="#6060A8"/></svg>
<div class="a" style="left:289px;top:229px;width:15px;height:15px;background:#D4D0C8;border-top:1px solid #fff;border-left:1px solid #fff;border-right:1px solid #808080;border-bottom:1px solid #808080"></div>
<svg class="a" style="left:289px;top:229px" width="15" height="15"><rect x="3" y="3" width="6" height="6" fill="#fff" stroke="#6060A8"/><rect x="5.5" y="5.5" width="6.5" height="6.5" fill="#fff" stroke="#6060A8"/></svg>
<div class="a" style="left:309px;top:229px;width:15px;height:15px;background:#D4D0C8;border-top:1px solid #fff;border-left:1px solid #fff;border-right:1px solid #808080;border-bottom:1px solid #808080"></div>
<svg class="a" style="left:309px;top:229px" width="15" height="15"><rect x="3" y="3" width="6" height="6" fill="#8888C8" stroke="#6060A8"/><rect x="5.5" y="5.5" width="6.5" height="6.5" fill="#9090D0" stroke="#6060A8"/></svg>
<div class="a" style="left:329px;top:229px;width:15px;height:15px;background:#D4D0C8;border-top:1px solid #fff;border-left:1px solid #fff;border-right:1px solid #808080;border-bottom:1px solid #808080"></div>
<svg class="a" style="left:329px;top:229px" width="15" height="15"><path d="M5,3 h-2 v9 h2 M10,3 h2 v9 h-2" stroke="#6060A8" stroke-width="1.2" fill="none"/><rect x="7" y="7" width="1.5" height="1.5" fill="#333"/><path d="M10,12 l2.5,-2.5 v2.5 z" fill="#000"/></svg>
<div class="a" style="left:347px;top:228px;width:28px;height:17px;border-top:1px solid #A8A49C;border-left:1px solid #A8A49C;border-right:1px solid #fff;border-bottom:1px solid #fff"></div>
<div class="t" style="left:347px;top:230px;width:28px;text-align:center;font-size:10px">1</div>
<div class="a" style="left:378px;top:228px;width:41px;height:17px;border-top:1px solid #A8A49C;border-left:1px solid #A8A49C;border-right:1px solid #fff;border-bottom:1px solid #fff"></div>
<div class="t" style="left:378px;top:230px;width:41px;text-align:center;font-size:10px">12.0 fps</div>
<div class="a" style="left:423px;top:228px;width:35px;height:17px;border-top:1px solid #A8A49C;border-left:1px solid #A8A49C;border-right:1px solid #fff;border-bottom:1px solid #fff"></div>
<div class="t" style="left:423px;top:230px;width:35px;text-align:center;font-size:10px">0.0s</div>
<div class="a hatch" style="left:462px;top:229px;width:746px;height:15px"></div>
<div class="a" style="left:462px;top:229px;width:15px;height:15px;background:#D4D0C8;border-top:1px solid #fff;border-left:1px solid #fff;border-right:1px solid #808080;border-bottom:1px solid #808080"></div>
<svg class="a" style="left:462px;top:229px" width="15" height="15"><path d="M5,7.5 l4,-4 v8 z" fill="#000"/></svg>
<div class="a" style="left:477px;top:229px;width:139px;height:15px;background:#D4D0C8;border-top:1px solid #fff;border-left:1px solid #fff;border-right:1px solid #808080;border-bottom:1px solid #808080"></div>
<div class="a" style="left:1193px;top:229px;width:15px;height:15px;background:#D4D0C8;border-top:1px solid #fff;border-left:1px solid #fff;border-right:1px solid #808080;border-bottom:1px solid #808080"></div>
<svg class="a" style="left:1193px;top:229px" width="15" height="15"><path d="M10,7.5 l-4,-4 v8 z" fill="#000"/></svg>
<div class="a" style="left:73px;top:252px;width:1136px;height:595px;background:#D0D0D0"></div>
<div class="a" style="left:366px;top:354px;width:550px;height:400px;background:#fff"></div>
<div class="a hatch" style="left:1209px;top:252px;width:16px;height:595px"></div>
<div class="a" style="left:1209px;top:252px;width:16px;height:16px;background:#D4D0C8;border-top:1px solid #fff;border-left:1px solid #fff;border-right:1px solid #404040;border-bottom:1px solid #404040;box-shadow:inset -1px -1px 0 #808080"></div>
<svg class="a" style="left:1209px;top:252px" width="16" height="16"><path d="M3.5,10 h8 l-4,-4 z" fill="#000"/></svg>
<div class="a" style="left:1209px;top:458px;width:16px;height:181px;background:#D4D0C8;border-top:1px solid #fff;border-left:1px solid #fff;border-right:1px solid #404040;border-bottom:1px solid #404040;box-shadow:inset -1px -1px 0 #808080"></div>
<div class="a" style="left:1209px;top:831px;width:16px;height:16px;background:#D4D0C8;border-top:1px solid #fff;border-left:1px solid #fff;border-right:1px solid #404040;border-bottom:1px solid #404040;box-shadow:inset -1px -1px 0 #808080"></div>
<svg class="a" style="left:1209px;top:831px" width="16" height="16"><path d="M3.5,6 h8 l-4,4 z" fill="#000"/></svg>
<div class="a hatch" style="left:73px;top:847px;width:1136px;height:16px"></div>
<div class="a" style="left:73px;top:847px;width:16px;height:16px;background:#D4D0C8;border-top:1px solid #fff;border-left:1px solid #fff;border-right:1px solid #404040;border-bottom:1px solid #404040;box-shadow:inset -1px -1px 0 #808080"></div>
<svg class="a" style="left:73px;top:847px" width="16" height="16"><path d="M6,7.5 l4,-4 v8 z" fill="#000"/></svg>
<div class="a" style="left:327px;top:847px;width:628px;height:16px;background:#D4D0C8;border-top:1px solid #fff;border-left:1px solid #fff;border-right:1px solid #404040;border-bottom:1px solid #404040;box-shadow:inset -1px -1px 0 #808080"></div>
<div class="a" style="left:1193px;top:847px;width:16px;height:16px;background:#D4D0C8;border-top:1px solid #fff;border-left:1px solid #fff;border-right:1px solid #404040;border-bottom:1px solid #404040;box-shadow:inset -1px -1px 0 #808080"></div>
<svg class="a" style="left:1193px;top:847px" width="16" height="16"><path d="M10,7.5 l-4,-4 v8 z" fill="#000"/></svg>
<div class="a" style="left:1209px;top:847px;width:16px;height:16px;background:#D4D0C8;border-right:1px solid #808080;border-bottom:1px solid #808080"></div>
<div class="a" style="left:1225px;top:429px;width:7px;height:48px;background:#E4E4E4"></div>
<svg class="a" style="left:1225px;top:448px" width="7" height="10"><path d="M2,1 L6,5 L2,9 Z" fill="#222"/></svg>
<svg class="a" style="left:0;top:0" width="1440" height="900" viewBox="0 0 1440 900">
<path d="M432.0,333.0 C433.8,333.0 429.3,335.2 439.0,335.0 C448.7,334.8 471.7,332.7 490.0,332.0 C508.3,331.3 537.2,330.5 549.0,331.0 C560.8,331.5 557.8,332.8 561.0,335.0 C564.2,337.2 566.2,340.0 568.0,344.0 C569.8,348.0 571.7,353.8 572.0,359.0 C572.3,364.2 572.2,368.3 570.0,375.0 C567.8,381.7 562.7,390.8 559.0,399.0 C555.3,407.2 550.2,417.3 548.0,424.0 C545.8,430.7 545.7,433.2 546.0,439.0 C546.3,444.8 547.2,450.8 550.0,459.0 C552.8,467.2 559.3,478.7 563.0,488.0 C566.7,497.3 569.7,508.0 572.0,515.0 C574.3,522.0 576.7,522.8 577.0,530.0 C577.3,537.2 576.8,549.3 574.0,558.0 C571.2,566.7 565.2,574.2 560.0,582.0 C554.8,589.8 546.6,600.0 543.0,605.0 C539.4,610.0 539.2,607.7 538.5,612.0 C537.8,616.3 540.4,623.2 539.0,631.0 C537.6,638.8 534.7,652.8 530.0,659.0 C525.3,665.2 521.0,666.2 511.0,668.0 C501.0,669.8 485.2,670.0 470.0,670.0 C454.8,670.0 429.8,669.2 420.0,668.0 C410.2,666.8 413.5,667.7 411.0,663.0 C408.5,658.3 405.3,647.7 405.0,640.0 C404.7,632.3 406.0,624.8 409.0,617.0 C412.0,609.2 420.3,600.8 423.0,593.0 C425.7,585.2 426.7,580.5 425.0,570.0 C423.3,559.5 416.5,541.7 413.0,530.0 C409.5,518.3 405.7,506.2 404.0,500.0 C402.3,493.8 402.7,497.2 403.0,493.0 C403.3,488.8 403.3,481.0 406.0,475.0 C408.7,469.0 415.0,463.0 419.0,457.0 C423.0,451.0 428.2,445.3 430.0,439.0 C431.8,432.7 431.5,426.3 430.0,419.0 C428.5,411.7 424.3,402.3 421.0,395.0 C417.7,387.7 412.7,381.0 410.0,375.0 C407.3,369.0 404.8,363.8 405.0,359.0 C405.2,354.2 408.3,348.8 411.0,346.0 C413.7,343.2 418.2,343.8 421.0,342.0 C423.8,340.2 426.2,336.5 428.0,335.0 C429.8,333.5 430.2,333.0 432.0,333.0Z" fill="#03CC0B"/>
<path d="M606.0,346.0 C610.8,342.0 618.0,339.3 626.0,338.0 C634.0,336.7 644.7,336.3 654.0,338.0 C663.3,339.7 678.2,345.3 682.0,348.0 C685.8,350.7 677.5,350.8 677.0,354.0 C676.5,357.2 677.2,362.5 679.0,367.0 C680.8,371.5 686.8,375.3 688.0,381.0 C689.2,386.7 688.3,394.8 686.0,401.0 C683.7,407.2 676.7,412.8 674.0,418.0 C671.3,423.2 670.0,426.0 670.0,432.0 C670.0,438.0 671.8,445.8 674.0,454.0 C676.2,462.2 681.3,473.3 683.0,481.0 C684.7,488.7 684.2,493.0 684.0,500.0 C683.8,507.0 684.3,515.2 682.0,523.0 C679.7,530.8 675.8,539.2 670.0,547.0 C664.2,554.8 652.0,562.3 647.0,570.0 C642.0,577.7 640.5,584.5 640.0,593.0 C639.5,601.5 643.3,613.2 644.0,621.0 C644.7,628.8 645.5,633.0 644.0,640.0 C642.5,647.0 638.8,658.0 635.0,663.0 C631.2,668.0 628.5,668.0 621.0,670.0 C613.5,672.0 600.5,673.8 590.0,675.0 C579.5,676.2 564.2,680.8 558.0,677.0 C551.8,673.2 553.3,660.2 553.0,652.0 C552.7,643.8 551.7,636.2 556.0,628.0 C560.3,619.8 573.5,612.7 579.0,603.0 C584.5,593.3 586.7,581.3 589.0,570.0 C591.3,558.7 591.7,542.5 593.0,535.0 C594.3,527.5 594.5,531.2 597.0,525.0 C599.5,518.8 605.2,507.7 608.0,498.0 C610.8,488.3 613.3,476.5 614.0,467.0 C614.7,457.5 613.8,450.7 612.0,441.0 C610.2,431.3 605.8,419.2 603.0,409.0 C600.2,398.8 596.0,387.8 595.0,380.0 C594.0,372.2 595.2,367.7 597.0,362.0 C598.8,356.3 601.2,350.0 606.0,346.0Z" fill="#03CC0B"/>
<path d="M734.0,349.0 C739.8,346.2 750.3,343.0 757.0,343.0 C763.7,343.0 766.7,345.0 774.0,349.0 C781.3,353.0 794.8,361.5 801.0,367.0 C807.2,372.5 809.2,377.7 811.0,382.0 C812.8,386.3 812.2,387.8 812.0,393.0 C811.8,398.2 812.2,404.5 810.0,413.0 C807.8,421.5 803.0,433.5 799.0,444.0 C795.0,454.5 789.2,467.0 786.0,476.0 C782.8,485.0 781.2,488.2 780.0,498.0 C778.8,507.8 779.0,521.8 779.0,535.0 C779.0,548.2 781.7,565.7 780.0,577.0 C778.3,588.3 772.7,596.0 769.0,603.0 C765.3,610.0 760.5,612.8 758.0,619.0 C755.5,625.2 755.7,633.3 754.0,640.0 C752.3,646.7 750.8,655.2 748.0,659.0 C745.2,662.8 745.0,660.8 737.0,663.0 C729.0,665.2 711.2,670.0 700.0,672.0 C688.8,674.0 677.7,677.2 670.0,675.0 C662.3,672.8 657.3,665.7 654.0,659.0 C650.7,652.3 649.7,641.3 650.0,635.0 C650.3,628.7 651.8,624.8 656.0,621.0 C660.2,617.2 668.8,615.8 675.0,612.0 C681.2,608.2 689.3,603.8 693.0,598.0 C696.7,592.2 696.2,587.5 697.0,577.0 C697.8,566.5 697.3,546.3 698.0,535.0 C698.7,523.7 699.0,517.0 701.0,509.0 C703.0,501.0 706.7,493.0 710.0,487.0 C713.3,481.0 718.8,479.3 721.0,473.0 C723.2,466.7 724.2,457.8 723.0,449.0 C721.8,440.2 715.7,428.5 714.0,420.0 C712.3,411.5 712.5,405.8 713.0,398.0 C713.5,390.2 715.5,379.3 717.0,373.0 C718.5,366.7 719.2,364.0 722.0,360.0 C724.8,356.0 728.2,351.8 734.0,349.0Z" fill="#03CC0B"/>
<path d="M848.0,334.0 C853.0,331.2 860.3,329.0 866.0,328.0 C871.7,327.0 876.3,325.8 882.0,328.0 C887.7,330.2 893.7,335.3 900.0,341.0 C906.3,346.7 914.5,353.7 920.0,362.0 C925.5,370.3 931.2,378.7 933.0,391.0 C934.8,403.3 929.5,423.3 931.0,436.0 C932.5,448.7 939.3,456.7 942.0,467.0 C944.7,477.3 947.0,487.7 947.0,498.0 C947.0,508.3 946.5,517.2 942.0,529.0 C937.5,540.8 926.7,557.2 920.0,569.0 C913.3,580.8 905.7,592.8 902.0,600.0 C898.3,607.2 899.2,608.0 898.0,612.0 C896.8,616.0 897.3,617.8 895.0,624.0 C892.7,630.2 888.7,641.8 884.0,649.0 C879.3,656.2 874.3,663.5 867.0,667.0 C859.7,670.5 849.0,672.3 840.0,670.0 C831.0,667.7 817.7,658.0 813.0,653.0 C808.3,648.0 811.8,644.8 812.0,640.0 C812.2,635.2 812.2,631.0 814.0,624.0 C815.8,617.0 819.5,609.0 823.0,598.0 C826.5,587.0 832.7,569.7 835.0,558.0 C837.3,546.3 838.5,538.8 837.0,528.0 C835.5,517.2 829.0,502.5 826.0,493.0 C823.0,483.5 819.5,479.2 819.0,471.0 C818.5,462.8 820.5,452.2 823.0,444.0 C825.5,435.8 829.5,429.7 834.0,422.0 C838.5,414.3 847.3,404.7 850.0,398.0 C852.7,391.3 852.2,389.0 850.0,382.0 C847.8,375.0 839.3,362.2 837.0,356.0 C834.7,349.8 834.2,348.7 836.0,345.0 C837.8,341.3 843.0,336.8 848.0,334.0Z" fill="#03CC0B"/>
<path d="M431.7,326.5 V333 M426,331.5 H433 M561,335.5 L566,332.5 M561,337 L565.5,339.5 M680,346.5 L687,345 M681,347 L687,348.5" stroke="#03CC0B" stroke-width="2" stroke-linecap="round" fill="none"/>
<path d="M421.0,657.0 C426.0,651.5 443.2,642.0 450.0,639.0 C456.8,636.0 457.0,638.3 462.0,639.0 C467.0,639.7 474.7,640.8 480.0,643.0 C485.3,645.2 491.0,648.8 494.0,652.0 C497.0,655.2 497.5,658.3 498.0,662.0 C498.5,665.7 498.7,670.0 497.0,674.0 C495.3,678.0 492.7,682.7 488.0,686.0 C483.3,689.3 477.2,691.3 469.0,694.0 C460.8,696.7 445.5,701.2 439.0,702.0 C432.5,702.8 432.7,701.3 430.0,699.0 C427.3,696.7 424.7,692.5 423.0,688.0 C421.3,683.5 420.3,677.2 420.0,672.0 C419.7,666.8 416.0,662.5 421.0,657.0Z" fill="#718C0E" stroke="#000" stroke-width="2.9"/>
<path d="M560.5,662.8 C561.7,659.6 563.2,655.4 566.0,653.0 C568.8,650.6 573.2,649.4 577.5,648.6 C581.8,647.8 586.8,647.5 591.7,648.0 C596.6,648.5 602.8,649.4 606.8,651.4 C610.8,653.4 614.3,656.9 616.0,660.0 C617.7,663.1 617.2,666.4 617.0,670.0 C616.8,673.6 616.5,678.2 615.0,681.7 C613.5,685.2 610.9,689.0 607.7,691.0 C604.5,693.0 601.0,693.5 596.0,694.0 C591.0,694.5 582.7,694.5 577.5,694.0 C572.3,693.5 567.9,693.0 565.0,691.0 C562.1,689.0 561.0,684.9 560.0,681.7 C559.0,678.5 558.9,675.1 559.0,672.0 C559.1,668.9 559.3,666.0 560.5,662.8Z" fill="#718C0E" stroke="#000" stroke-width="2.9"/>
<path d="M673.0,672.7 C674.1,669.1 676.0,662.2 678.4,658.4 C680.8,654.6 683.1,651.6 687.3,650.0 C691.4,648.4 698.2,648.7 703.3,649.0 C708.3,649.3 713.1,650.0 717.6,652.0 C722.1,654.0 727.3,658.0 730.0,661.0 C732.7,664.0 733.0,667.2 733.6,670.0 C734.2,672.8 734.7,675.5 733.6,678.0 C732.5,680.5 730.9,682.7 727.3,685.0 C723.7,687.3 717.2,690.2 712.0,692.0 C706.8,693.8 701.0,695.6 696.0,695.8 C691.0,696.0 685.7,694.5 682.0,693.0 C678.3,691.5 675.7,689.2 674.0,687.0 C672.3,684.8 672.2,682.4 672.0,680.0 C671.8,677.6 671.9,676.3 673.0,672.7Z" fill="#718C0E" stroke="#000" stroke-width="2.9"/>
<path d="M814.0,656.0 C815.4,654.7 814.7,654.0 818.6,653.8 C822.5,653.6 832.0,653.7 837.5,654.7 C843.0,655.7 847.5,658.0 851.7,660.0 C856.0,662.0 861.1,663.5 863.0,666.5 C864.9,669.5 864.0,673.6 863.0,678.0 C862.0,682.4 858.9,689.2 857.0,693.0 C855.1,696.8 855.4,699.4 851.7,700.5 C848.0,701.6 840.2,700.4 834.7,699.6 C829.2,698.8 823.2,698.0 818.6,695.8 C814.0,693.6 809.3,690.4 807.3,686.4 C805.3,682.4 806.3,676.1 806.8,672.0 C807.2,667.9 808.8,664.5 810.0,661.8 C811.2,659.1 812.6,657.3 814.0,656.0Z" fill="#718C0E" stroke="#000" stroke-width="2.9"/>
<path d="M431.0,630.0 Q433.3,637.5 439.0,643.0 Q436.7,635.5 431.0,630.0 Z" fill="#000" stroke="#000" stroke-width="1.3" stroke-linejoin="round"/>
<path d="M466.0,618.0 Q464.0,627.5 466.0,637.0 Q468.0,627.5 466.0,618.0 Z" fill="#000" stroke="#000" stroke-width="1.3" stroke-linejoin="round"/>
<path d="M500.0,627.0 Q488.1,636.6 479.0,649.0 Q490.9,639.4 500.0,627.0 Z" fill="#000" stroke="#000" stroke-width="1.3" stroke-linejoin="round"/>
<path d="M419.0,652.0 Q425.7,657.3 434.0,659.0 Q427.3,653.7 419.0,652.0 Z" fill="#000" stroke="#000" stroke-width="1.3" stroke-linejoin="round"/>
<path d="M408.0,686.0 Q418.2,684.4 427.0,679.0 Q416.8,680.6 408.0,686.0 Z" fill="#000" stroke="#000" stroke-width="1.3" stroke-linejoin="round"/>
<path d="M464.0,684.0 Q467.4,692.6 474.0,699.0 Q470.6,690.4 464.0,684.0 Z" fill="#000" stroke="#000" stroke-width="1.3" stroke-linejoin="round"/>
<path d="M483.0,666.0 Q490.9,670.4 500.0,671.0 Q492.1,666.6 483.0,666.0 Z" fill="#000" stroke="#000" stroke-width="1.3" stroke-linejoin="round"/>
<path d="M457.0,644.0 Q455.6,647.5 457.0,651.0 Q458.4,647.5 457.0,644.0 Z" fill="#000" stroke="#000" stroke-width="1.3" stroke-linejoin="round"/>
<path d="M448.0,658.0 Q447.7,661.4 451.0,662.0 Q451.3,658.6 448.0,658.0 Z" fill="#000" stroke="#000" stroke-width="1.3" stroke-linejoin="round"/>
<path d="M464.0,658.0 Q466.0,660.3 469.0,660.0 Q467.0,657.7 464.0,658.0 Z" fill="#000" stroke="#000" stroke-width="1.3" stroke-linejoin="round"/>
<path d="M471.0,669.0 Q473.7,671.1 477.0,670.0 Q474.3,667.9 471.0,669.0 Z" fill="#000" stroke="#000" stroke-width="1.3" stroke-linejoin="round"/>
<path d="M457.0,669.0 Q452.6,676.9 452.0,686.0 Q456.4,678.1 457.0,669.0 Z" fill="#000" stroke="#000" stroke-width="1.3" stroke-linejoin="round"/>
<path d="M582.7,633.5 Q581.2,643.3 583.6,653.0 Q585.1,643.2 582.7,633.5 Z" fill="#000" stroke="#000" stroke-width="1.3" stroke-linejoin="round"/>
<path d="M622.8,642.5 Q613.8,650.0 607.7,660.0 Q616.7,652.5 622.8,642.5 Z" fill="#000" stroke="#000" stroke-width="1.3" stroke-linejoin="round"/>
<path d="M639.8,674.0 Q622.4,672.2 605.0,673.6 Q622.4,675.4 639.8,674.0 Z" fill="#000" stroke="#000" stroke-width="1.3" stroke-linejoin="round"/>
<path d="M540.0,701.5 Q554.7,693.2 567.0,681.7 Q552.3,690.0 540.0,701.5 Z" fill="#000" stroke="#000" stroke-width="1.3" stroke-linejoin="round"/>
<path d="M566.0,658.0 Q570.2,657.3 573.0,654.0 Q568.8,654.7 566.0,658.0 Z" fill="#000" stroke="#000" stroke-width="1.3" stroke-linejoin="round"/>
<path d="M573.0,668.0 Q580.3,665.6 586.0,660.4 Q578.7,662.8 573.0,668.0 Z" fill="#000" stroke="#000" stroke-width="1.3" stroke-linejoin="round"/>
<path d="M589.8,672.0 Q593.2,669.1 593.0,664.7 Q589.6,667.6 589.8,672.0 Z" fill="#000" stroke="#000" stroke-width="1.3" stroke-linejoin="round"/>
<path d="M590.0,683.0 Q592.0,686.7 596.0,688.0 Q594.0,684.3 590.0,683.0 Z" fill="#000" stroke="#000" stroke-width="1.3" stroke-linejoin="round"/>
<path d="M672.0,648.7 Q677.4,656.9 686.4,661.0 Q681.0,652.8 672.0,648.7 Z" fill="#000" stroke="#000" stroke-width="1.3" stroke-linejoin="round"/>
<path d="M716.7,642.4 Q714.5,648.6 715.8,655.0 Q718.0,648.8 716.7,642.4 Z" fill="#000" stroke="#000" stroke-width="1.3" stroke-linejoin="round"/>
<path d="M755.8,658.4 Q741.9,661.2 729.0,667.0 Q742.9,664.2 755.8,658.4 Z" fill="#000" stroke="#000" stroke-width="1.3" stroke-linejoin="round"/>
<path d="M657.6,700.7 Q671.6,689.5 683.0,675.8 Q669.0,687.0 657.6,700.7 Z" fill="#000" stroke="#000" stroke-width="1.3" stroke-linejoin="round"/>
<path d="M699.0,665.6 Q700.9,668.1 704.0,668.0 Q702.1,665.5 699.0,665.6 Z" fill="#000" stroke="#000" stroke-width="1.3" stroke-linejoin="round"/>
<path d="M720.0,663.8 Q714.4,668.2 712.0,675.0 Q717.6,670.6 720.0,663.8 Z" fill="#000" stroke="#000" stroke-width="1.3" stroke-linejoin="round"/>
<path d="M696.0,680.7 Q698.1,683.5 701.6,683.3 Q699.5,680.5 696.0,680.7 Z" fill="#000" stroke="#000" stroke-width="1.3" stroke-linejoin="round"/>
<path d="M852.6,635.4 Q844.3,651.2 839.4,668.4 Q847.7,652.6 852.6,635.4 Z" fill="#000" stroke="#000" stroke-width="1.3" stroke-linejoin="round"/>
<path d="M805.9,660.4 Q812.0,665.1 819.6,666.5 Q813.5,661.8 805.9,660.4 Z" fill="#000" stroke="#000" stroke-width="1.3" stroke-linejoin="round"/>
<path d="M804.4,694.4 Q811.4,689.3 815.8,681.7 Q808.8,686.8 804.4,694.4 Z" fill="#000" stroke="#000" stroke-width="1.3" stroke-linejoin="round"/>
<path d="M879.0,676.5 Q870.2,673.5 861.0,674.0 Q869.8,677.0 879.0,676.5 Z" fill="#000" stroke="#000" stroke-width="1.3" stroke-linejoin="round"/>
<path d="M839.4,673.0 Q837.4,681.0 839.0,689.0 Q841.0,681.0 839.4,673.0 Z" fill="#000" stroke="#000" stroke-width="1.3" stroke-linejoin="round"/>
<path d="M819.6,673.6 Q823.5,677.4 829.0,678.0 Q825.1,674.2 819.6,673.6 Z" fill="#000" stroke="#000" stroke-width="1.3" stroke-linejoin="round"/>
<path d="M821.4,692.0 Q824.7,693.6 828.0,692.0 Q824.7,690.4 821.4,692.0 Z" fill="#000" stroke="#000" stroke-width="1.3" stroke-linejoin="round"/>
<path d="M850.7,685.0 Q853.6,687.4 856.0,684.5 Q853.1,682.1 850.7,685.0 Z" fill="#000" stroke="#000" stroke-width="1.3" stroke-linejoin="round"/>
</svg>
<div class="a" style="left:1232px;top:38px;width:208px;height:833px;background:#D4D0C8"></div>
<div class="a" style="left:1233px;top:38px;width:207px;height:20px;background:linear-gradient(to bottom,#B4C3DA,#A2B2CE 55%,#C6D2E4);border-top:1px solid #E8EEF6;border-bottom:1px solid #8A96A8"></div>
<svg class="a" style="left:1235px;top:40px" width="6" height="14"><g fill="#5A6A88"><rect x="1" y="1" width="1" height="1"/><rect x="1" y="3" width="1" height="1"/><rect x="1" y="5" width="1" height="1"/><rect x="1" y="7" width="1" height="1"/><rect x="1" y="9" width="1" height="1"/><rect x="1" y="11" width="1" height="1"/><rect x="4" y="1" width="1" height="1"/><rect x="4" y="3" width="1" height="1"/><rect x="4" y="5" width="1" height="1"/><rect x="4" y="7" width="1" height="1"/><rect x="4" y="9" width="1" height="1"/><rect x="4" y="11" width="1" height="1"/></g></svg>
<svg class="a" style="left:1246px;top:42px" width="10" height="12"><path d="M2,1.5 L7.5,6 L2,10.5 Z" fill="#000"/></svg>
<div class="t" style="left:1258px;top:41px">Color</div>
<div class="a" style="left:1233px;top:58px;width:207px;height:1px;background:#D4D0C8"></div>
<div class="a" style="left:1233px;top:59px;width:207px;height:18px;background:linear-gradient(to bottom,#B4C3DA,#A2B2CE 55%,#C6D2E4);border-top:1px solid #E8EEF6;border-bottom:1px solid #8A96A8"></div>
<svg class="a" style="left:1235px;top:61px" width="6" height="14"><g fill="#5A6A88"><rect x="1" y="1" width="1" height="1"/><rect x="1" y="3" width="1" height="1"/><rect x="1" y="5" width="1" height="1"/><rect x="1" y="7" width="1" height="1"/><rect x="1" y="9" width="1" height="1"/><rect x="1" y="11" width="1" height="1"/><rect x="4" y="1" width="1" height="1"/><rect x="4" y="3" width="1" height="1"/><rect x="4" y="5" width="1" height="1"/><rect x="4" y="7" width="1" height="1"/><rect x="4" y="9" width="1" height="1"/><rect x="4" y="11" width="1" height="1"/></g></svg>
<svg class="a" style="left:1244px;top:62px" width="12" height="12"><path d="M1.5,3 H10.5 L6,9 Z" fill="#000"/></svg>
<div class="t" style="left:1258px;top:62px">Library - Untitled-1</div>
<svg class="a" style="left:1422px;top:61px" width="16" height="14"><g fill="#000"><rect x="2" y="2" width="2" height="2"/><rect x="2" y="5" width="2" height="2"/><rect x="2" y="8" width="2" height="2"/><rect x="5" y="2.5" width="7" height="1"/><rect x="5" y="5.5" width="7" height="1"/><rect x="5" y="8.5" width="6" height="1"/><path d="M10,10 h5 l-2.5,2.5 z"/></g></svg>
<div class="a" style="left:1236px;top:82px;width:149px;height:21px;background:#fff;border-top:2px solid #6A6A6A;border-left:2px solid #6A6A6A;border-bottom:1px solid #fff;border-right:1px solid #fff"></div>
<div class="t" style="left:1239px;top:86px">Untitled-1</div>
<div class="a" style="left:1368px;top:84px;width:16px;height:17px;background:#D4D0C8;border-top:1px solid #fff;border-left:1px solid #fff;border-right:1px solid #404040;border-bottom:1px solid #404040;box-shadow:inset -1px -1px 0 #808080"></div>
<svg class="a" style="left:1368px;top:84px" width="16" height="17"><path d="M4,7 h8 l-4,4 z" fill="#000"/></svg>
<svg class="a" style="left:1390px;top:85px" width="46" height="16"><path d="M1,7.5 h5 M1,5.5 h5" stroke="#777" stroke-width="1"/><rect x="6" y="3" width="2" height="8" fill="#888"/><rect x="8" y="4" width="6" height="6" fill="#E8E8E8" stroke="#777" stroke-width="1"/><rect x="14" y="3" width="2" height="8" fill="#888"/><rect x="28.5" y="2.5" width="9" height="7" fill="#C8D8F8" stroke="#4A6AA8"/><rect x="33.5" y="6.5" width="9" height="7" fill="#D8E8F8" stroke="#4A6AA8"/><path d="M31,9 h8 M36.5,6.5 l2.5,2.5 l-2.5,2.5" stroke="#1040E0" stroke-width="1.4" fill="none"/></svg>
<div class="a" style="left:1233px;top:106px;width:207px;height:1px;background:#A8A49C"></div>
<div class="a" style="left:1233px;top:107px;width:207px;height:1px;background:#fff"></div>
<div class="t" style="left:1237px;top:111px">Empty library</div>
<div class="a" style="left:1233px;top:126px;width:207px;height:1px;background:#fff"></div>
<div class="a" style="left:1233px;top:127px;width:207px;height:2px;background:#6A6A6A"></div>
<div class="a" style="left:1235px;top:129px;width:203px;height:97px;background:#C0C0C0"></div>
<div class="a" style="left:1233px;top:226px;width:207px;height:2px;background:#F4F2EE"></div>
<div class="a" style="left:1233px;top:230px;width:191px;height:17px;background:#D4D0C8;border-top:1px solid #fff"></div>
<div class="a" style="left:1233px;top:246px;width:191px;height:1px;background:#000"></div>
<div class="a" style="left:1381px;top:231px;width:1px;height:15px;background:#808080"></div><div class="a" style="left:1382px;top:231px;width:1px;height:15px;background:#fff"></div>
<div class="t" style="left:1236px;top:232px">Name</div>
<div class="t" style="left:1385px;top:232px">Type</div>
<div class="a" style="left:1233px;top:247px;width:191px;height:605px;background:#fff"></div>
<div class="a hatch" style="left:1424px;top:230px;width:16px;height:622px"></div>
<div class="a" style="left:1424px;top:230px;width:16px;height:17px;background:#D4D0C8;border-top:1px solid #fff;border-left:1px solid #fff;border-right:1px solid #404040;border-bottom:1px solid #404040;box-shadow:inset -1px -1px 0 #808080"></div>
<svg class="a" style="left:1424px;top:230px" width="16" height="17"><path d="M4,11.5 h7 M4,9.5 h7" stroke="#000" stroke-width="1"/><path d="M5,8 h5 l-2.5,-3 z" fill="#000"/></svg>
<div class="a" style="left:1424px;top:247px;width:16px;height:16px;background:#D4D0C8;border-top:1px solid #fff;border-left:1px solid #fff;border-right:1px solid #404040;border-bottom:1px solid #404040;box-shadow:inset -1px -1px 0 #808080"></div>
<svg class="a" style="left:1424px;top:247px" width="16" height="16"><rect x="3.5" y="3.5" width="9" height="8" fill="#fff" stroke="#000" stroke-width="1.5"/></svg>
<div class="a" style="left:1424px;top:263px;width:16px;height:16px;background:#D4D0C8;border-top:1px solid #fff;border-left:1px solid #fff;border-right:1px solid #404040;border-bottom:1px solid #404040;box-shadow:inset -1px -1px 0 #808080"></div>
<svg class="a" style="left:1424px;top:263px" width="16" height="16"><rect x="6.5" y="4.5" width="3" height="7" fill="#fff" stroke="#888" stroke-width="1"/></svg>
<div class="a" style="left:1424px;top:279px;width:16px;height:16px;background:#D4D0C8;border-top:1px solid #fff;border-left:1px solid #fff;border-right:1px solid #404040;border-bottom:1px solid #404040;box-shadow:inset -1px -1px 0 #808080"></div>
<svg class="a" style="left:1424px;top:279px" width="16" height="16"><path d="M4,10 h8 l-4,-4 z" fill="#888"/></svg>
<div class="a" style="left:1424px;top:836px;width:16px;height:16px;background:#D4D0C8;border-top:1px solid #fff;border-left:1px solid #fff;border-right:1px solid #404040;border-bottom:1px solid #404040;box-shadow:inset -1px -1px 0 #808080"></div>
<svg class="a" style="left:1424px;top:836px" width="16" height="16"><path d="M4,6 h8 l-4,4 z" fill="#888"/></svg>
<div class="a" style="left:1233px;top:852px;width:207px;height:18px;background:#D4D0C8"></div>
<svg class="a" style="left:1233px;top:853px" width="80" height="16"><path d="M5.5,3.5 H10 L12.5,6 V13.5 H5.5 Z" fill="#fff" stroke="#222" stroke-width="1"/><path d="M1.5,10 h6 M4.5,7 v6" stroke="#000" stroke-width="2.4"/><path d="M1.5,10 h6 M4.5,7 v6" stroke="#7070F0" stroke-width="1.1"/><path d="M18.5,5.5 H22 L23,4 H26 L27,5.5 H30.5 V13.5 H18.5 Z" fill="#F0E0A0" stroke="#333" stroke-width="1"/><path d="M15.5,10 h6 M18.5,7 v6" stroke="#000" stroke-width="2.4"/><path d="M15.5,10 h6 M18.5,7 v6" stroke="#7070F0" stroke-width="1.1"/><circle cx="39" cy="8" r="4.6" fill="#A8A8B0"/><path d="M39,5.5 v5" stroke="#E8E8F0" stroke-width="1.4"/><path d="M67.5,6 h9 M70,4.5 h4" stroke="#A8A8A8" stroke-width="1.2"/><path d="M68.5,7 h7 l-1,7 h-5 z" fill="#E0E0E0" stroke="#A8A8A8" stroke-width="1"/></svg>
<div class="a hatch" style="left:1313px;top:852px;width:111px;height:16px"></div>
<div class="a" style="left:1312px;top:852px;width:16px;height:16px;background:#D4D0C8;border-top:1px solid #fff;border-left:1px solid #fff;border-right:1px solid #404040;border-bottom:1px solid #404040;box-shadow:inset -1px -1px 0 #808080"></div>
<svg class="a" style="left:1312px;top:852px" width="16" height="16"><path d="M5.5,7.5 l4,-4 v8 z" fill="#000"/></svg>
<div class="a" style="left:1328px;top:852px;width:29px;height:16px;background:#D4D0C8;border-top:1px solid #fff;border-left:1px solid #fff;border-right:1px solid #404040;border-bottom:1px solid #404040;box-shadow:inset -1px -1px 0 #808080"></div>
<div class="a" style="left:1408px;top:852px;width:16px;height:16px;background:#D4D0C8;border-top:1px solid #fff;border-left:1px solid #fff;border-right:1px solid #404040;border-bottom:1px solid #404040;box-shadow:inset -1px -1px 0 #808080"></div>
<svg class="a" style="left:1408px;top:852px" width="16" height="16"><path d="M10,7.5 l-4,-4 v8 z" fill="#000"/></svg>
<div class="a" style="left:1424px;top:852px;width:16px;height:16px;background:#fff"></div>
<div class="a" style="left:0;top:870px;width:1440px;height:1px;background:#9A9A9A"></div>
<div class="a" style="left:0;top:871px;width:1440px;height:1px;background:#fff"></div>
<div class="a" style="left:0;top:872px;width:1440px;height:1px;background:#ECECEC"></div>
<div class="a" style="left:0;top:873px;width:1440px;height:27px;background:#D4D0C8"></div>
<div class="a" style="left:2px;top:876px;width:54px;height:22px;background:#D4D0C8;border-top:1px solid #fff;border-left:1px solid #fff;border-right:1px solid #000;border-bottom:1px solid #000;box-shadow:inset -1px -1px 0 #808080"></div>
<svg class="a" style="left:4px;top:879px" width="20" height="16"><g fill="#000"><path d="M7,3 Q10,1 13,2 L12,14 Q9,13 6,14 Z"/><path d="M13,2 Q16,1 19,2 L18,14 Q15,13 12,14 Z"/></g><path d="M8,4 L11,3.5 L10.5,7.5 L7.5,8 Z" fill="#F01010"/><path d="M13.5,3 L17.5,3 L17,7.5 L13,7.5 Z" fill="#10C010"/><path d="M7.5,9 L10.5,8.5 L10,12.5 L7,13 Z" fill="#1030F0"/><path d="M13,9 L17,9 L16.5,13 L12.5,13 Z" fill="#F0D010"/><path d="M1,5 h4 M1,8 h4 M1,11 h4" stroke="#F01010" stroke-width="1" stroke-dasharray="1 1"/><path d="M1,6.5 h4 M1,9.5 h4 M1,12.5 h4" stroke="#1030F0" stroke-width="1" stroke-dasharray="1 1"/></svg>
<div class="t" style="left:24px;top:881px;font-weight:bold">Пуск</div>
<div class="a" style="left:59px;top:876px;width:1px;height:22px;background:#808080"></div><div class="a" style="left:60px;top:876px;width:1px;height:22px;background:#fff"></div>
<div class="a" style="left:63px;top:878px;width:3px;height:18px;border-top:1px solid #fff;border-left:1px solid #fff;border-right:1px solid #808080;border-bottom:1px solid #808080"></div>
<svg class="a" style="left:70px;top:877px" width="140" height="20"><rect x="3.5" y="6.5" width="15" height="10" fill="#FFF8D0" stroke="#000" stroke-width="1"/><rect x="15" y="8" width="2" height="2" fill="#E00000"/><path d="M6,5 Q9,0 13,3" stroke="#1060E0" stroke-width="2" fill="none"/><path d="M8,17 Q12,19 15,15" stroke="#1060E0" stroke-width="2" fill="none"/><text x="26" y="16.5" font-family="Liberation Sans" font-size="20" font-weight="bold" fill="#1E7FE8">e</text><path d="M27,16 Q25,10 33,5.5 Q40,1.5 42.5,3 Q43,5 40,8" stroke="#1060C8" stroke-width="1.4" fill="none"/><rect x="50.5" y="3.5" width="15" height="14" fill="#3A80D0" stroke="#000"/><rect x="52.5" y="6.5" width="9" height="9" fill="#FFF8E0" stroke="#222"/><path d="M56,12 L64,3" stroke="#F0C020" stroke-width="2"/><path d="M56,12 L64,3" stroke="#222" stroke-width="0.5"/><circle cx="80" cy="10" r="7.5" fill="#E86A10"/><circle cx="81.5" cy="9" r="4.5" fill="#3A70C0"/><path d="M74,8 Q76,2 81,3 Q77,5 78,9 Q79,12 83,12 Q80,16 75,13 Z" fill="#F08A20"/><ellipse cx="102.5" cy="10" rx="7.2" ry="7.8" fill="#E81010"/><ellipse cx="102.5" cy="10" rx="3" ry="5.3" fill="#fff"/><ellipse cx="102.5" cy="10" rx="1.8" ry="4.5" fill="#F0E8E8"/><rect x="118" y="2" width="16" height="16" fill="#848410"/><circle cx="126" cy="10" r="5.5" fill="#848410" stroke="#fff" stroke-width="1.8"/><path d="M126,6 v4.5 h3" stroke="#fff" stroke-width="1.5" fill="none"/><path d="M119.5,3.5 h2.5 M119.5,3.5 v2.5 M132.5,3.5 h-2.5 M132.5,3.5 v2.5 M119.5,16.5 h2.5 M119.5,16.5 v-2.5 M132.5,16.5 h-2.5 M132.5,16.5 v-2.5" stroke="#fff" stroke-width="1.2"/></svg>
<div class="a" style="left:214px;top:876px;width:1px;height:22px;background:#808080"></div><div class="a" style="left:215px;top:876px;width:1px;height:22px;background:#fff"></div>
<div class="a" style="left:218px;top:878px;width:3px;height:18px;border-top:1px solid #fff;border-left:1px solid #fff;border-right:1px solid #808080;border-bottom:1px solid #808080"></div>
<div class="a" style="left:225px;top:876px;width:160px;height:22px;background:#D4D0C8;border-top:1px solid #fff;border-left:1px solid #fff;border-right:1px solid #000;border-bottom:1px solid #000;box-shadow:inset -1px -1px 0 #808080"></div>
<svg class="a" style="left:229px;top:879px" width="16" height="16"><path d="M0.5,2.5 H6 L7,1 H11 L12,2.5 H15.5 V14.5 H0.5 Z" fill="#F0E8A0" stroke="#606010" stroke-width="1"/><ellipse cx="8" cy="9" rx="5.5" ry="3" fill="#60C060" stroke="#6060E0" stroke-width="1"/></svg>
<div class="t" style="left:246px;top:881px">Мои рисунки</div>
<div class="a hatch" style="left:387px;top:876px;width:161px;height:22px;border-top:1px solid #000;border-left:1px solid #000;border-right:1px solid #fff;border-bottom:1px solid #fff;box-shadow:inset 1px 1px 0 #808080;background-image:repeating-conic-gradient(#D4D0C8 0 25%,#FFFFFF 0 50%)"></div>
<svg class="a" style="left:391px;top:879px" width="17" height="17"><circle cx="8.5" cy="8.5" r="8" fill="#D81010"/><path d="M12.5,3.5 Q8,3 7.5,8 Q7,13 3.5,13.5 M6,7.5 h4" stroke="#fff" stroke-width="1.6" fill="none"/></svg>
<div class="t" style="left:409px;top:881px;font-weight:bold">Macromedia Flash Pro...</div>
<div class="a" style="left:1272px;top:876px;width:167px;height:22px;border-top:1px solid #808080;border-left:1px solid #808080;border-right:1px solid #fff;border-bottom:1px solid #fff"></div>
<svg class="a" style="left:1274px;top:878px" width="112" height="18"><path d="M2,6 h3 l5,-5 v16 l-5,-5 h-3 z" fill="#F8E860" stroke="#222" stroke-width="1"/><path d="M12,5 l4,-2 M12,9 h4 M12,13 l4,2" stroke="#999" stroke-width="1"/><rect x="20" y="1" width="16" height="16" fill="#000080"/><text x="28" y="13" text-anchor="middle" font-family="Liberation Sans" font-size="10" fill="#fff">RU</text><rect x="40" y="2" width="11" height="14" fill="#B8D8F0" stroke="#345" stroke-width="1"/><path d="M40,6 h11 M40,10 h11 M45,2 v14" stroke="#345" stroke-width="0.8"/><circle cx="49.5" cy="14" r="2.5" fill="#F0F010"/><path d="M55,1 h4 l3,9 l6,-9 h4 l-10,16 h-3 z" fill="#E81010"/><path d="M64,11 l6,6 M67,17 h3 v-3" stroke="#000" stroke-width="2" fill="none"/><path d="M76,4 l3,-3 l4,4 q3,0 4,2 q-3,0 -3,3 l-3,7 h-3 l0,-7 z" fill="#E81010"/><path d="M80,8 q2,2 5,0" stroke="#000" stroke-width="1" fill="none"/><circle cx="99" cy="10" r="6" fill="#1040C0"/><path d="M94,7 q4,-2 9,2 q-2,5 -6,5" fill="#10A040"/><path d="M92,3 h4 v4 h-4z" fill="#E81010"/><path d="M98,2 h4 v4 h-4z" fill="#10C010"/><circle cx="97" cy="9" r="1.8" fill="#F0E010"/></svg>
<div class="t" style="left:1397px;top:881px">14:41</div>
</body></html>
